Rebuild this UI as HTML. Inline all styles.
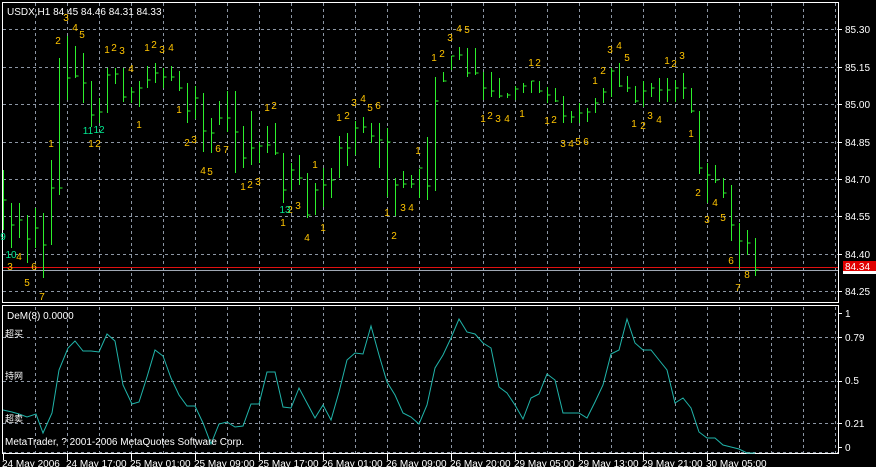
<!DOCTYPE html>
<html><head><meta charset="utf-8"><style>
html,body{margin:0;padding:0;background:#000;width:876px;height:467px;overflow:hidden}
svg{display:block}
text{font-family:"Liberation Sans","Noto Sans CJK SC",sans-serif;font-size:10px}
.y{fill:#ffc400;font-size:10.5px}.g{fill:#00e890;font-size:10.5px}.w{fill:#fff}
</style></head><body>
<svg width="876" height="467" viewBox="0 0 876 467" xmlns="http://www.w3.org/2000/svg">
<rect width="876" height="467" fill="#000"/>
<g stroke="#8c96a4" stroke-width="1" stroke-dasharray="3,3" fill="none" shape-rendering="crispEdges">
<path d="M35.5 3V302M67.5 3V302M99.5 3V302M131.5 3V302M163.5 3V302M195.5 3V302M227.5 3V302M259.5 3V302M291.5 3V302M323.5 3V302M355.5 3V302M387.5 3V302M419.5 3V302M451.5 3V302M483.5 3V302M515.5 3V302M547.5 3V302M579.5 3V302M611.5 3V302M643.5 3V302M675.5 3V302M707.5 3V302M739.5 3V302M771.5 3V302M803.5 3V302M835.5 3V302"/>
<path d="M35.5 307V453M67.5 307V453M99.5 307V453M131.5 307V453M163.5 307V453M195.5 307V453M227.5 307V453M259.5 307V453M291.5 307V453M323.5 307V453M355.5 307V453M387.5 307V453M419.5 307V453M451.5 307V453M483.5 307V453M515.5 307V453M547.5 307V453M579.5 307V453M611.5 307V453M643.5 307V453M675.5 307V453M707.5 307V453M739.5 307V453M771.5 307V453M803.5 307V453M835.5 307V453"/>
<path d="M3 29.5H838M3 67.5H838M3 104.5H838M3 142.5H838M3 179.5H838M3 216.5H838M3 254.5H838M3 291.5H838"/>
<path d="M3 337.5H838M3 381.5H838M3 423.5H838M3 452.5H838"/>
</g>
<g shape-rendering="crispEdges">
<path d="M3 267.5H838" stroke="#e01010"/>
<path d="M3 270.5H838" stroke="#a0a8b4"/>
<g stroke="#fff" fill="none">
<rect x="2.5" y="2.5" width="836" height="300"/>
<rect x="2.5" y="305.5" width="836" height="148"/>
<path d="M838 29.5h4M838 67.5h4M838 104.5h4M838 142.5h4M838 179.5h4M838 216.5h4M838 254.5h4M838 291.5h4M838 313.5h4M838 337.5h4M838 381.5h4M838 423.5h4M838 447.5h4"/>
<path d="M3.5 454v6M67.5 454v6M131.5 454v6M195.5 454v6M259.5 454v6M323.5 454v6M387.5 454v6M451.5 454v6M515.5 454v6M579.5 454v6M643.5 454v6M707.5 454v6"/>
</g>
<path stroke="#2cf02c" stroke-width="1" fill="none" d="M3.5 170V230M3.5 200h3M11.5 203V248M11.5 225h3M19.5 203V238M19.5 220h3M27.5 215V263M27.5 239h3M35.5 208V248M35.5 228h3M43.5 213V278M43.5 245h3M51.5 160V245M51.5 188h3M59.5 58V195M59.5 188h3M67.5 36V100M67.5 78h3M75.5 46V78M75.5 76h3M83.5 53V103M83.5 83h3M91.5 81V127M91.5 115h3M99.5 98V123M99.5 112h3M107.5 68V113M107.5 75h3M115.5 68V84M115.5 74h3M123.5 68V102M123.5 97h3M131.5 87V103M131.5 92h3M139.5 81V107M139.5 88h3M147.5 66V88M147.5 80h3M155.5 63V83M155.5 73h3M163.5 68V88M163.5 77h3M171.5 66V81M171.5 77h3M179.5 71V91M179.5 88h3M187.5 83V123M187.5 111h3M195.5 86V119M195.5 98h3M203.5 93V152M203.5 131h3M211.5 118V153M211.5 133h3M219.5 101V125M219.5 118h3M227.5 91V132M227.5 118h3M235.5 91V173M235.5 132h3M243.5 126V168M243.5 158h3M251.5 111V165M251.5 148h3M259.5 142V163M259.5 146h3M267.5 126V153M267.5 145h3M275.5 123V155M275.5 153h3M283.5 153V203M283.5 190h3M291.5 163V190M291.5 170h3M299.5 155V185M299.5 178h3M307.5 173V218M307.5 215h3M315.5 183V215M315.5 190h3M323.5 168V207M323.5 185h3M331.5 168V198M331.5 180h3M339.5 136V178M339.5 148h3M347.5 133V166M347.5 148h3M355.5 121V155M355.5 128h3M363.5 117V133M363.5 127h3M371.5 123V143M371.5 136h3M379.5 123V168M379.5 140h3M387.5 128V197M387.5 142h3M395.5 178V216M395.5 185h3M403.5 171V188M403.5 184h3M411.5 175V188M411.5 184h3M419.5 169V198M419.5 168h3M427.5 137V200M427.5 186h3M435.5 77V191M435.5 101h3M443.5 72V82M443.5 81h3M451.5 56V70M451.5 56h3M459.5 47V60M459.5 55h3M467.5 48V77M467.5 73h3M475.5 48V75M475.5 73h3M483.5 72V100M483.5 88h3M491.5 72V97M491.5 91h3M499.5 78V98M499.5 96h3M507.5 93V98M507.5 95h3M515.5 86V100M515.5 89h3M523.5 83V93M523.5 86h3M531.5 81V93M531.5 81h3M539.5 81V93M539.5 91h3M547.5 87V103M547.5 95h3M555.5 88V102M555.5 101h3M563.5 96V123M563.5 116h3M571.5 111V123M571.5 117h3M579.5 103V123M579.5 113h3M587.5 108V122M587.5 112h3M595.5 98V113M595.5 103h3M603.5 88V103M603.5 92h3M611.5 68V97M611.5 71h3M619.5 63V87M619.5 86h3M627.5 76V92M627.5 88h3M635.5 86V103M635.5 101h3M643.5 81V107M643.5 91h3M651.5 83V97M651.5 88h3M659.5 78V102M659.5 90h3M667.5 78V102M667.5 90h3M675.5 80V102M675.5 88h3M683.5 73V99M683.5 88h3M691.5 88V113M691.5 111h3M699.5 111V174M699.5 168h3M707.5 163V203M707.5 175h3M715.5 165V183M715.5 180h3M723.5 178V198M723.5 193h3M731.5 185V241M731.5 225h3M739.5 223V268M739.5 241h3M747.5 230V255M747.5 243h3M755.5 238V276M755.5 270h3"/>
</g>
<polyline fill="none" stroke="#20b4aa" stroke-width="1" points="3,410 12,412 19,414 27,417 36,414 43,433 52,413 59,370 68,348 75,341 83,351 91,351 99,352 107,334 115,341 123,385 132,404 139,402 147,377 155,350 163,356 171,378 179,395 187,406 195,406 203,423 211,444 219,424 227,422 235,427 243,426 251,404 259,404 267,372 275,372 283,407 291,408 299,388 307,403 315,418 323,405 331,420 339,392 347,360 355,353 363,354 371,326 379,355 387,382 395,395 403,413 411,417 419,424 427,405 435,368 443,355 451,338 459,319 467,332 475,334 483,343 491,348 499,387 507,393 515,405 523,419 531,398 539,394 547,374 555,380 563,413 571,413 579,413 587,418 595,402 603,385 611,354 619,350 627,319 635,343 643,350 651,350 659,360 667,370 675,403 683,398 691,408 699,432 707,438 715,438 723,445 731,447 739,449 747,453 755,453"/>
<rect x="843" y="261" width="33" height="10" fill="#e00000"/>
<rect x="843" y="271" width="33" height="3" fill="#fff"/>
<g class="w">
<text x="7" y="15">USDX,H1  84.45 84.46 84.31 84.33</text>
<text x="845" y="33">85.30</text><text x="845" y="71">85.15</text><text x="845" y="108">85.00</text><text x="845" y="146">84.85</text><text x="845" y="183">84.70</text><text x="845" y="220">84.55</text><text x="845" y="258">84.40</text><text x="845" y="295">84.25</text>
<text x="845" y="270">84.34</text>
<text x="845" y="317">1</text><text x="845" y="341">0.79</text><text x="845" y="384">0.5</text><text x="845" y="427">0.21</text><text x="845" y="451">0</text>
<text x="7" y="319">DeM(8) 0.0000</text>
<text x="5" y="337" style="font-size:9px">超买</text>
<text x="5" y="379" style="font-size:9px">持网</text>
<text x="5" y="422" style="font-size:9px">超卖</text>
<text x="5" y="445">MetaTrader, ? 2001-2006 MetaQuotes Software Corp.</text>
<text x="2" y="467">24 May 2006</text><text x="66" y="467">24 May 17:00</text><text x="130" y="467">25 May 01:00</text><text x="194" y="467">25 May 09:00</text><text x="258" y="467">25 May 17:00</text><text x="322" y="467">26 May 01:00</text><text x="386" y="467">26 May 09:00</text><text x="450" y="467">26 May 20:00</text><text x="514" y="467">29 May 05:00</text><text x="578" y="467">29 May 13:00</text><text x="642" y="467">29 May 21:00</text><text x="706" y="467">30 May 05:00</text>
</g>
<g class="y" text-anchor="middle">
<text x="66" y="21">3</text><text x="75" y="31">4</text><text x="82" y="38">5</text><text x="58" y="44">2</text>
<text x="107" y="53">1</text><text x="114" y="51">2</text><text x="122" y="54">3</text>
<text x="147" y="51">1</text><text x="154" y="48">2</text><text x="162" y="53">3</text><text x="171" y="51">4</text>
<text x="131" y="72">4</text><text x="267" y="111">1</text><text x="274" y="109">2</text><text x="179" y="113">1</text><text x="139" y="128">1</text>
<text x="91" y="147">1</text><text x="98" y="147">2</text><text x="51" y="147">1</text><text x="187" y="146">2</text><text x="194" y="143">3</text>
<text x="218" y="152">6</text><text x="226" y="153">7</text><text x="203" y="174">4</text><text x="210" y="175">5</text>
<text x="243" y="190">1</text><text x="250" y="188">2</text><text x="258" y="185">3</text>
<text x="290" y="213">2</text><text x="298" y="209">3</text><text x="283" y="226">1</text>
<text x="19" y="260">4</text><text x="10" y="270">3</text><text x="34" y="270">6</text><text x="27" y="286">5</text><text x="42" y="300">7</text>
<text x="315" y="168">1</text><text x="307" y="241">4</text><text x="323" y="231">1</text>
<text x="339" y="121">1</text><text x="347" y="119">2</text><text x="354" y="106">3</text><text x="363" y="102">4</text><text x="370" y="111">5</text><text x="378" y="109">6</text>
<text x="418" y="154">1</text><text x="387" y="216">1</text><text x="394" y="239">2</text><text x="403" y="211">3</text><text x="411" y="211">4</text>
<text x="434" y="61">1</text><text x="442" y="57">2</text><text x="450" y="41">3</text><text x="459" y="32">4</text><text x="467" y="33">5</text>
<text x="483" y="122">1</text><text x="490" y="119">2</text><text x="498" y="122">3</text><text x="507" y="122">4</text><text x="522" y="117">1</text>
<text x="531" y="66">1</text><text x="538" y="66">2</text><text x="547" y="124">1</text><text x="554" y="123">2</text>
<text x="563" y="147">3</text><text x="571" y="147">4</text><text x="578" y="145">5</text><text x="586" y="145">6</text>
<text x="595" y="84">1</text><text x="603" y="74">2</text><text x="610" y="53">3</text><text x="619" y="49">4</text><text x="627" y="61">5</text>
<text x="634" y="127">1</text><text x="643" y="129">2</text><text x="650" y="119">3</text><text x="659" y="123">4</text>
<text x="667" y="64">1</text><text x="674" y="67">2</text><text x="682" y="59">3</text><text x="691" y="137">1</text>
<text x="698" y="196">2</text><text x="715" y="206">4</text><text x="707" y="223">3</text><text x="723" y="221">5</text>
<text x="731" y="264">6</text><text x="747" y="278">8</text><text x="738" y="291">7</text>
</g>
<g class="g" text-anchor="middle">
<text x="88" y="134">11</text><text x="99" y="133">12</text><text x="285" y="213">13</text><text x="11" y="258">10</text><text x="3" y="240">9</text>
</g>
</svg>
</body></html>
